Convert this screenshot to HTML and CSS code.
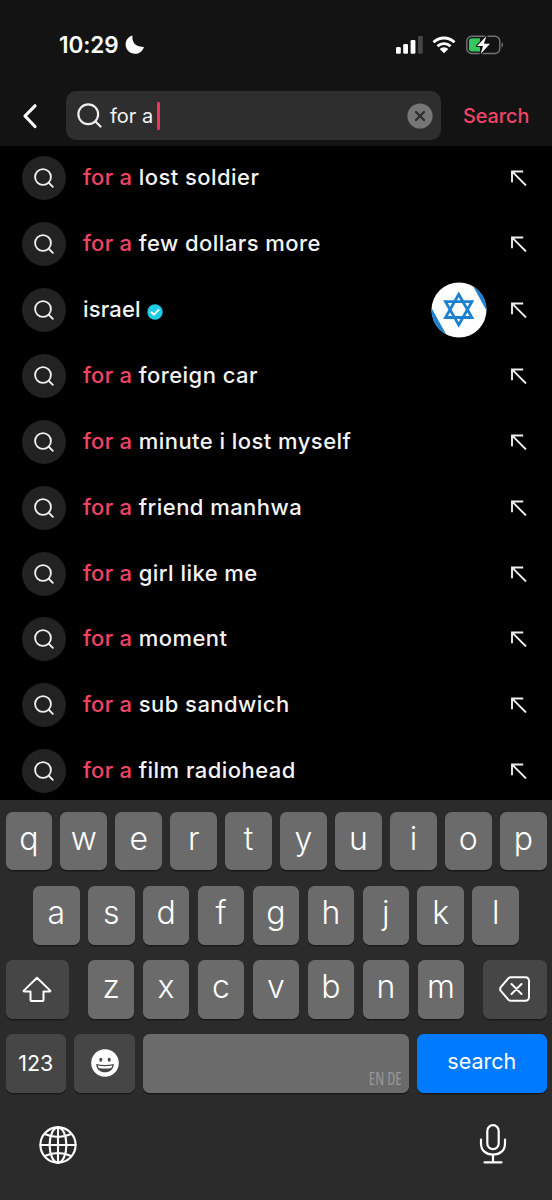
FILE: index.html
```
<!DOCTYPE html>
<html lang="en">
<head>
<meta charset="utf-8">
<title>Search</title>
<link rel="stylesheet" href="styles.css">
</head>
<body>
<svg class="defs" aria-hidden="true">
  <symbol id="magnifier" viewBox="0 0 24 24"><circle cx="10.8" cy="10.8" r="9.5"/><path d="M17.7 17.7 22.6 22.6"/></symbol>
  <symbol id="arrow" viewBox="0 0 16 16"><path d="M1 12.2V1.5h11.2M1.2 1.7 15 15.5"/></symbol>
</svg>
<div class="screen">
  <header class="top">
    <div class="status">
      <span class="time">10:29</span>
      <svg class="moon" viewBox="0 0 20 20"><path d="M7.4.6C6.800 7.500 10.500 12.300 19 11.900 17.600 16 14.300 18.800 10 18.800 4.800 18.800.6 14.700.6 9.600.6 5.400 3.400 1.600 7.400.6Z"/></svg>
      <svg class="signal" viewBox="0 0 28 18"><rect x="0" y="11" width="4.800" height="6.800" rx="1.3"/><rect x="7.200" y="8" width="4.800" height="9.800" rx="1.3"/><rect x="14.600" y="4" width="4.800" height="13.800" rx="1.3"/><rect class="dim" x="22" y="0" width="4.800" height="17.800" rx="1.3"/></svg>
      <svg class="wifi" viewBox="0 0 24 18"><path class="arc" d="M1.5 6.3a15 15 0 0 1 21 0M5.5 10.3a9.3 9.3 0 0 1 13 0"/><path d="M12 17.3 7.7 13a6.2 6.2 0 0 1 8.6 0Z"/></svg>
      <svg class="battery" viewBox="0 0 38 20"><rect class="shell" x=".8" y="1.3" width="33" height="17.2" rx="5"/><path class="cap" d="M35.5 7.2c2 .8 2 4.6 0 5.4Z"/><path class="charge" d="M6 3.3H14v13.2H6a3 3 0 0 1-3-3V6.300a3 3 0 0 1 3-3Z"/><path class="bolt" d="M20.5 1 11 11h6.1L14.6 19 24 8.8h-6.2Z"/></svg>
    </div>
    <div class="search-row">
      <svg class="back" viewBox="0 0 16 26"><path d="M13 2.8 3 13l10 10.5"/></svg>
      <div class="field">
        <svg class="field-icon"><use href="#magnifier"/></svg>
        <span class="query">for a</span><span class="caret"></span>
        <svg class="clear" viewBox="0 0 26 26"><circle cx="13" cy="13" r="12.6"/><path d="m9 9 8 8m0-8-8 8"/></svg>
      </div>
      <span class="submit">Search</span>
    </div>
  </header>
  <main class="list">
    <div class="row"><span class="disc"><svg><use href="#magnifier"/></svg></span><span class="label"><b>for a</b> lost soldier</span><svg class="arrow"><use href="#arrow"/></svg></div>
    <div class="row"><span class="disc"><svg><use href="#magnifier"/></svg></span><span class="label"><b>for a</b> few dollars more</span><svg class="arrow"><use href="#arrow"/></svg></div>
    <div class="row"><span class="disc"><svg><use href="#magnifier"/></svg></span><span class="label account">israel</span><svg class="verified" viewBox="0 0 16 16"><circle cx="8" cy="8" r="7.7"/><path d="m4.4 8.2 2.5 2.4 4.8-4.7"/></svg>
      <svg class="avatar" viewBox="0 0 56 56"><defs><clipPath id="round"><circle cx="28" cy="28" r="27.5"/></clipPath></defs><circle class="paper" cx="28" cy="28" r="27.5"/><g clip-path="url(#round)"><path class="band" d="M0 25 15 52V56H0ZM42 4 56 29.500V0H42Z"/></g><path class="star" d="m27.700 12.300 13.200 23.200H14.500ZM27.700 42.900 14.500 19.700h26.400Z"/></svg>
      <svg class="arrow"><use href="#arrow"/></svg></div>
    <div class="row"><span class="disc"><svg><use href="#magnifier"/></svg></span><span class="label"><b>for a</b> foreign car</span><svg class="arrow"><use href="#arrow"/></svg></div>
    <div class="row"><span class="disc"><svg><use href="#magnifier"/></svg></span><span class="label"><b>for a</b> minute i lost myself</span><svg class="arrow"><use href="#arrow"/></svg></div>
    <div class="row"><span class="disc"><svg><use href="#magnifier"/></svg></span><span class="label"><b>for a</b> friend manhwa</span><svg class="arrow"><use href="#arrow"/></svg></div>
    <div class="row"><span class="disc"><svg><use href="#magnifier"/></svg></span><span class="label"><b>for a</b> girl like me</span><svg class="arrow"><use href="#arrow"/></svg></div>
    <div class="row"><span class="disc"><svg><use href="#magnifier"/></svg></span><span class="label"><b>for a</b> moment</span><svg class="arrow"><use href="#arrow"/></svg></div>
    <div class="row"><span class="disc"><svg><use href="#magnifier"/></svg></span><span class="label"><b>for a</b> sub sandwich</span><svg class="arrow"><use href="#arrow"/></svg></div>
    <div class="row"><span class="disc"><svg><use href="#magnifier"/></svg></span><span class="label"><b>for a</b> film radiohead</span><svg class="arrow"><use href="#arrow"/></svg></div>
  </main>
  <section class="keyboard">
    <div class="keys first"><span class="key">q</span><span class="key">w</span><span class="key">e</span><span class="key">r</span><span class="key">t</span><span class="key">y</span><span class="key">u</span><span class="key">i</span><span class="key">o</span><span class="key">p</span></div>
    <div class="keys second"><span class="key">a</span><span class="key">s</span><span class="key">d</span><span class="key">f</span><span class="key">g</span><span class="key">h</span><span class="key">j</span><span class="key">k</span><span class="key">l</span></div>
    <div class="keys third">
      <span class="key dark"><svg class="shift" viewBox="0 0 30 26"><path d="M15 1.8 1.8 14.6q-.5.8.5.8H8.5v8q0 1.6 1.6 1.6h9.8q1.6 0 1.6-1.6v-8h6.2q1 0 .5-.8Z"/></svg></span>
      <div class="letters"><span class="key">z</span><span class="key">x</span><span class="key">c</span><span class="key">v</span><span class="key">b</span><span class="key">n</span><span class="key">m</span></div>
      <span class="key dark"><svg class="delete" viewBox="0 0 32 26"><path d="M12 1.2h14.5a3.5 3.5 0 0 1 3.5 3.5v16.6a3.5 3.5 0 0 1-3.5 3.5H12q-1.6 0-2.7-1.2L2 15.2q-1.8-2.2 0-4.4L9.3 2.4Q10.4 1.2 12 1.2ZM12.5 8l10 10m0-10-10 10"/></svg></span>
    </div>
    <div class="keys fourth">
      <span class="key dark small">123</span>
      <span class="key dark"><svg class="emoji" viewBox="0 0 28 28"><circle class="face" cx="14" cy="14" r="13.8"/><ellipse cx="9.8" cy="10.7" rx="1.5" ry="2"/><ellipse cx="18.2" cy="10.7" rx="1.5" ry="2"/><path d="M5.2 15q8.8 1.8 17.6 0c0 4.8-3.6 8.3-8.8 8.3S5.2 19.8 5.2 15Z"/><path class="teeth" d="M6.6 16.5q7.4 1.3 14.8 0-.5 2.5-2 2.7-5.4.8-10.8 0-1.5-.2-2-2.7Z"/></svg></span>
      <span class="key space"><span class="langs">EN DE</span></span>
      <span class="key go">search</span>
    </div>
    <div class="bottom">
      <svg class="globe" viewBox="0 0 38 38"><circle cx="19" cy="19" r="17.6"/><ellipse cx="19" cy="19" rx="8.4" ry="17.6"/><path d="M19 1.4v35.2M1.4 19h35.2M5.8 8q13.2 6 26.4 0M5.8 30q13.2-6 26.4 0"/></svg>
      <svg class="mic" viewBox="0 0 28 40"><rect x="8.3" y="1.2" width="11.4" height="24" rx="5.7"/><path d="M2 15.5v4C2 26.500 7 30.600 14 30.600s12-4.100 12-11.100v-4M14 30.600v7.400M5.500 38.300h17"/></svg>
    </div>
  </section>
</div>
</body>
</html>
```
FILE: styles.css
```
* { box-sizing: border-box; }
body { margin: 0; background: #000; color: #f4f4f4; font-family: Inter, "Liberation Sans", sans-serif; }
svg { display: block; flex: none; fill: none; stroke-linecap: round; stroke-linejoin: round; }
.defs { position: absolute; width: 0; height: 0; }
.screen { display: flex; flex-direction: column; width: 552px; height: 1200px; overflow: hidden; }

.top { height: 146px; background: #131313; }
.status { display: flex; align-items: center; height: 91px; padding: 0 48px 2px 59px; }
.time { font-size: 22.5px; font-weight: 600; line-height: 28px; letter-spacing: -.1px; color: #fff; width: 66px; white-space: nowrap; }
.moon { width: 20px; height: 20px; fill: #fff; }
.signal { width: 28px; height: 18px; margin-left: auto; fill: #fff; }
.signal .dim { fill: #454545; }
.wifi { width: 24px; height: 18px; margin-left: 8px; fill: #fff; }
.wifi .arc { fill: none; stroke: #fff; stroke-width: 2.9; stroke-linecap: butt; }
.battery { width: 38px; height: 20px; margin-left: 10px; }
.battery .shell { stroke: #737373; stroke-width: 1.4; }
.battery .cap { fill: #737373; }
.battery .charge { fill: #34c759; }
.battery .bolt { fill: #fff; stroke: #131313; stroke-width: 2.2; paint-order: stroke; }
.search-row { display: flex; align-items: center; height: 49px; }
.back { width: 16px; height: 26px; margin-left: 22px; stroke: #fff; stroke-width: 3.2; }
.field { display: flex; align-items: center; width: 375px; height: 49px; margin-left: 28px; padding: 0 8px 0 11px; border-radius: 10px; background: #2e2e2e; }
.field-icon { width: 25px; height: 25px; stroke: #eee; stroke-width: 2.1; }
.query { margin-left: 8px; width: 46px; font-size: 20px; line-height: 26px; white-space: nowrap; }
.caret { width: 3px; height: 28px; margin-left: 1px; border-radius: 1px; background: #f0355c; }
.clear { width: 26px; height: 26px; margin-left: auto; fill: #767676; stroke: none; }
.clear path { stroke: #2e2e2e; stroke-width: 2.4; }
.submit { margin-left: 22px; font-size: 19.8px; font-weight: 500; line-height: 28px; color: #f04468; }

.list { height: 654px; overflow: hidden; }
.row { display: flex; align-items: center; height: 65.9px; padding: 0 25px 1.4px 22px; }
.disc { display: grid; place-items: center; flex: none; width: 44px; height: 44px; border-radius: 50%; background: #222; }
.disc svg { width: 20px; height: 20px; stroke: #f0f0f0; stroke-width: 2.2; }
.label { margin-left: 17px; padding-bottom: 2px; font-size: 22px; font-weight: 500; line-height: 30px; letter-spacing: .45px; white-space: nowrap; }
.label b { font-weight: 500; letter-spacing: .3px; color: #f04468; }
.label.account { letter-spacing: .15px; }
.verified { width: 16px; height: 16px; margin: 4px 0 0 6px; fill: #20cce8; }
.verified path { fill: none; stroke: #fff; stroke-width: 1.9; }
.arrow { width: 16px; height: 16px; margin-left: auto; stroke: #eee; stroke-width: 1.9; stroke-linecap: butt; stroke-linejoin: miter; }
.avatar { width: 56px; height: 56px; margin-left: auto; }
.avatar + .arrow { margin-left: 24.5px; }
.avatar .paper { fill: #fff; }
.avatar .band { fill: #1b80d0; }
.avatar .star { stroke: #1b80d0; stroke-width: 2.8; stroke-linejoin: miter; }

.keyboard { display: flex; flex-direction: column; gap: 15.5px; height: 400px; padding: 11.5px 5.5px 0; background: #2b2b2b; }
.keys { display: flex; gap: 8.3px; height: 58.8px; }
.key { display: flex; flex: 1 1 0; align-items: center; justify-content: center; min-width: 0; padding-bottom: 4px; border-radius: 6.5px; background: #6b6b6b; box-shadow: 0 1.5px 0 #1a1a1a; color: #fff; font-size: 32px; font-weight: 300; line-height: 40px; }
.second { padding: 0 27.5px; }
.letters { display: flex; gap: 8.3px; width: 376.5px; }
.third { justify-content: space-between; }
.third > .dark { flex: 0 0 63.5px; padding: 0; }
.key.dark { padding: 0 0 1px; background: #464646; }
.fourth .dark { flex: 0 0 60.5px; }
.key.small { padding-bottom: 2px; font-size: 21.5px; font-weight: 400; }
.key.space { flex: 1; align-items: flex-end; justify-content: flex-end; padding: 0 7px 4px 0; }
.langs { color: #989898; font-family: "Open Sans", Roboto, sans-serif; font-stretch: 75%; font-size: 16px; font-weight: 400; line-height: 22px; transform: scaleY(1.15); }
.key.go { flex: 0 0 129.5px; padding-bottom: 5px; background: #007aff; font-size: 21.5px; font-weight: 400; }
.shift { width: 30px; height: 26px; stroke: #fff; stroke-width: 2; }
.delete { width: 32px; height: 26px; stroke: #fff; stroke-width: 2; }
.emoji { width: 28px; height: 28px; fill: #464646; }
.emoji .face, .emoji .teeth { fill: #fff; }
.bottom { display: flex; align-items: flex-start; justify-content: space-between; padding: 17.5px 39.5px 0 33.5px; }
.globe { width: 38px; height: 38px; margin-left: -.5px; stroke: #fff; stroke-width: 2.1; }
.mic { width: 28px; height: 40px; margin-top: -2px; stroke: #fff; stroke-width: 2.2; }
```
